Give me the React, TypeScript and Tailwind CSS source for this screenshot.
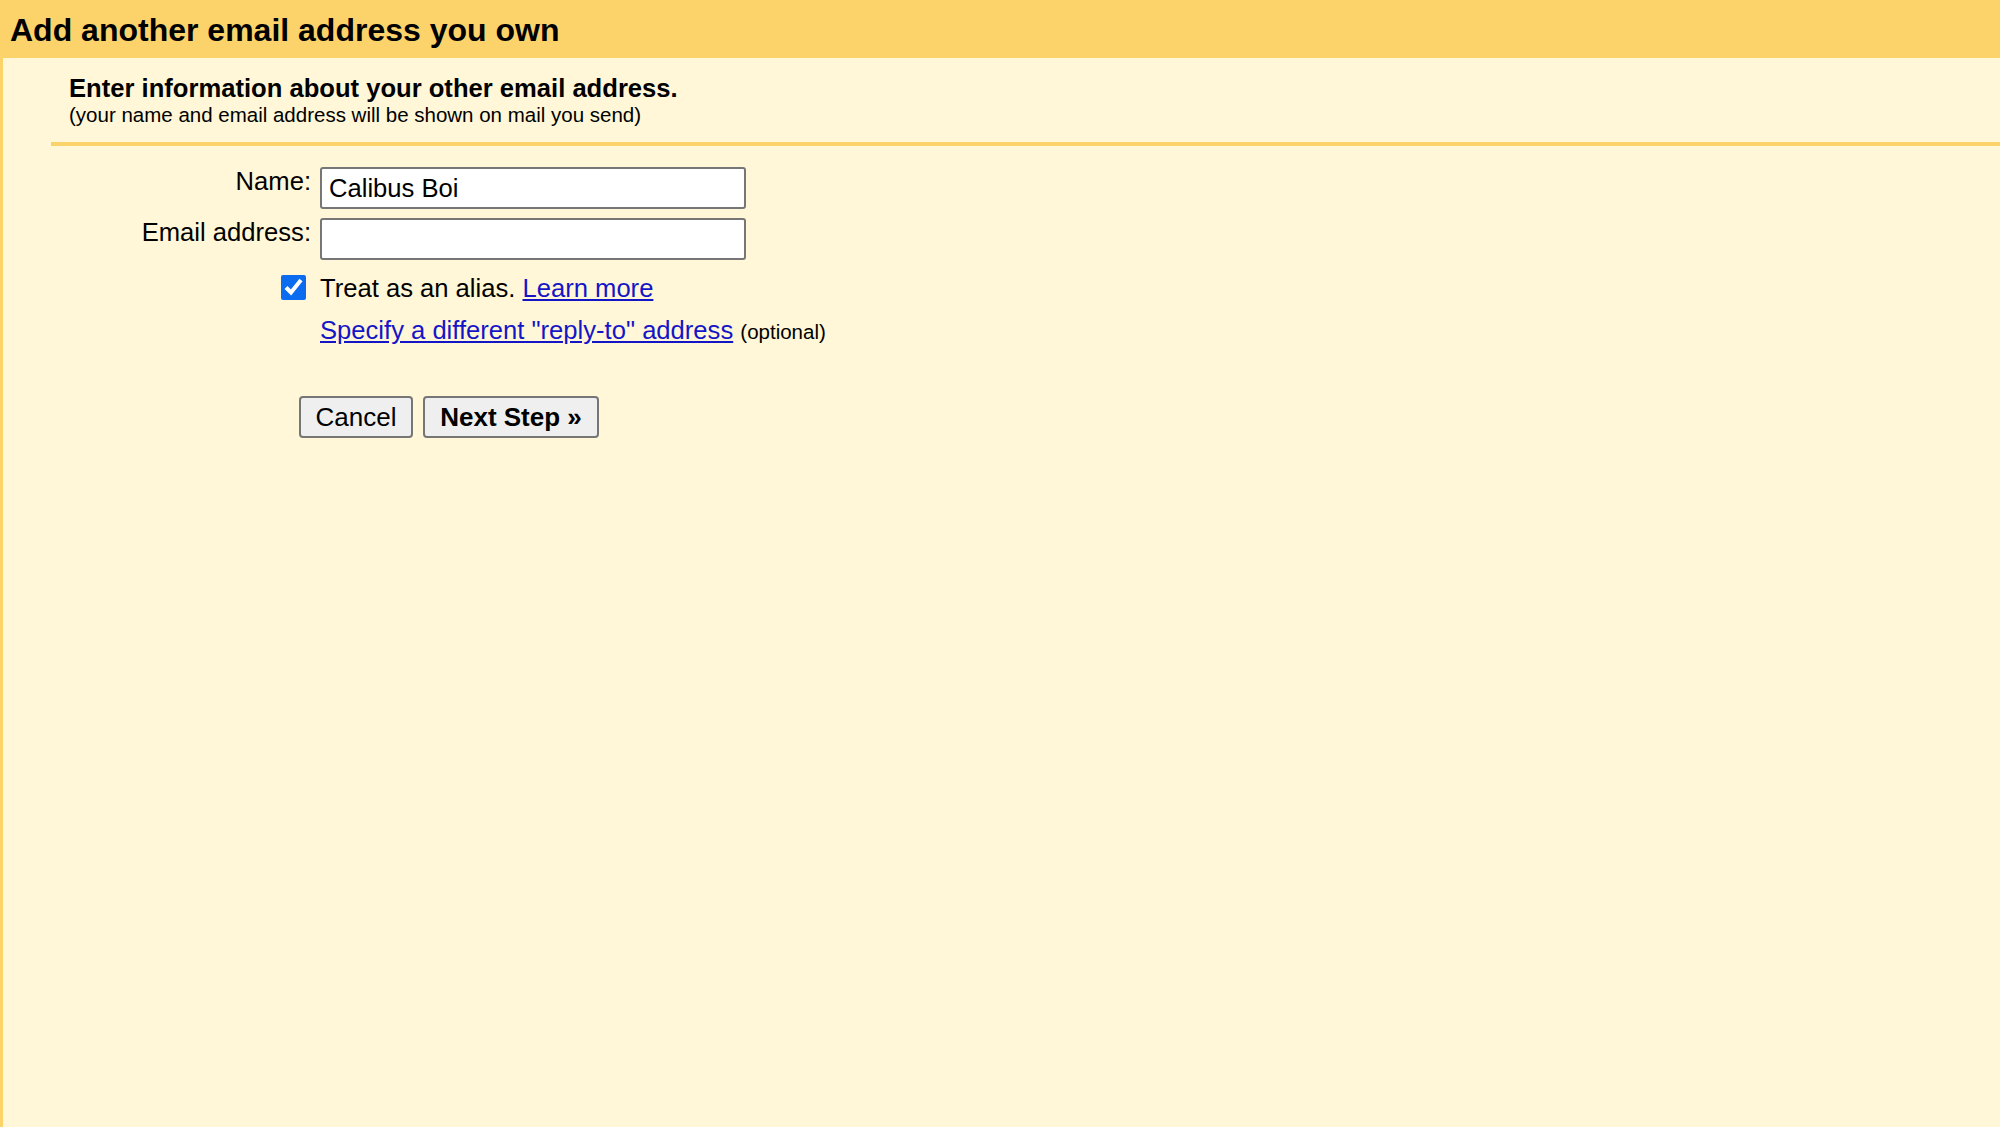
import React from "react";

export default function App() {
  return (
    <div className="min-h-screen w-full bg-[#fff7d7] font-['Liberation_Sans',Arial,sans-serif] text-black">
      <div className="h-[58px] bg-[#fcd36b] pl-[10px] pt-[11px]">
        <h1 className="text-[32px] font-bold leading-[38px]">Add another email address you own</h1>
      </div>

      <div className="min-h-[1069px] border-l-[3px] border-[#fcd36b] bg-[#fff7d7]">
        <div className="pl-[66px] pt-[15px]">
          <div className="text-[25.6px] font-bold leading-[30px]">Enter information about your other email address.</div>
          <div className="text-[20.5px] leading-[24px]">(your name and email address will be shown on mail you send)</div>
        </div>

        <div className="ml-[48px] mt-[15px] h-[4px] bg-[#fcd36b]" />

        <div className="mt-[21px] grid grid-cols-[308px_auto] gap-x-[9px] gap-y-[9px] text-[25.6px] leading-[30px]">
          <label className="text-right leading-[29px]">Name:</label>
          <input
            defaultValue="Calibus Boi"
            className="h-[42px] w-[426px] rounded-[3px] border-[2px] border-[#767676] bg-white px-[7px] text-[25.6px] outline-none"
          />

          <label className="text-right leading-[29px]">Email address:</label>
          <input className="h-[42px] w-[426px] rounded-[3px] border-[2px] border-[#767676] bg-white px-[7px] text-[25.6px] outline-none" />

          <div className="flex items-center justify-end pr-[5px] pt-[2px]">
            <input type="checkbox" defaultChecked className="h-[25px] w-[25px] accent-[#0b6cf0]" />
          </div>
          <div className="pt-[4px]">
            Treat as an alias.{" "}
            <a href="#" className="text-[#1515c8] underline">Learn more</a>
          </div>

          <div />
          <div className="pt-[3px]">
            <a href="#" className="text-[#1515c8] underline">Specify a different "reply-to" address</a>{" "}
            <span className="text-[20.5px]">(optional)</span>
          </div>
        </div>

        <div className="mt-[49px] flex gap-[10px] pl-[296px]">
          <button className="h-[42px] w-[114px] rounded-[4px] border-[2px] border-[#767676] bg-[#efefef] text-[26px]">
            Cancel
          </button>
          <button className="h-[42px] w-[176px] rounded-[4px] border-[2px] border-[#767676] bg-[#efefef] text-[26px] font-bold">
            Next Step »
          </button>
        </div>
      </div>
    </div>
  );
}
